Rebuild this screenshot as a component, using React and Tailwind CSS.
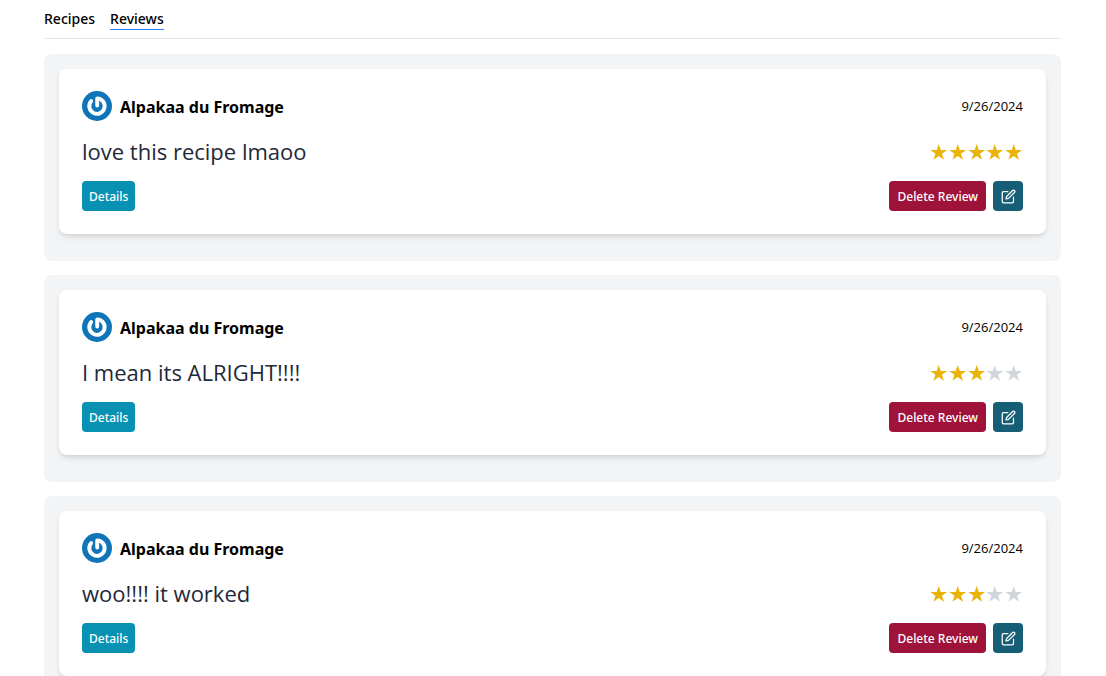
import { FiEdit } from "react-icons/fi";

const reviews = [
  { id: 1, author: "Alpakaa du Fromage", date: "9/26/2024", text: "love this recipe lmaoo", rating: 5 },
  { id: 2, author: "Alpakaa du Fromage", date: "9/26/2024", text: "I mean its ALRIGHT!!!!", rating: 3 },
  { id: 3, author: "Alpakaa du Fromage", date: "9/26/2024", text: "woo!!!! it worked", rating: 3 },
];

function Avatar() {
  return (
    <svg viewBox="0 0 30 30" className="size-[30px] shrink-0" aria-hidden="true">
      <circle cx="15" cy="15" r="15" fill="#0f75b8" />
      <path d="M15.2 14.6V7.4A7.7 7.7 0 1 1 9.2 10" fill="none" stroke="#fff" strokeWidth="3.9" strokeLinecap="round" strokeLinejoin="round" />
    </svg>
  );
}

function Stars({ rating }) {
  return (
    <div className="grid w-[94px] grid-cols-5" role="img" aria-label={`${rating} out of 5 stars`}>
      {[1, 2, 3, 4, 5].map((n) => (
        <svg key={n} viewBox="0 0 24 24" className={n <= rating ? "w-full fill-[#eab308]" : "w-full fill-gray-300"}>
          <path d="M12.4 2.4l2.6 7.8h8.1l-6.5 4.8 2.5 7.8-6.7-4.8-6.7 4.8 2.5-7.8-6.5-4.8h8.1z" />
        </svg>
      ))}
    </div>
  );
}

function ReviewCard({ review }) {
  return (
    <li className="rounded-lg bg-gray-100 px-[15px] pt-[15px] pb-[27px]">
      <article className="rounded-lg bg-white p-[23px] pt-[22px] shadow-md">
        <header className="flex items-center justify-between">
          <div className="flex items-center gap-2">
            <Avatar />
            <h3 className="pt-[2px] text-[16px] leading-[28px] font-bold text-black">{review.author}</h3>
          </div>
          <time className="font-['Open_Sans',sans-serif] text-[13px] leading-[30px] text-black">{review.date}</time>
        </header>
        <div className="mt-[15px] flex h-[30px] items-center justify-between">
          <p className="font-['Open_Sans',sans-serif] text-[22px] leading-[30px] font-medium text-gray-800">{review.text}</p>
          <Stars rating={review.rating} />
        </div>
        <div className="mt-[15px] flex items-center justify-between">
          <button className="h-[30px] rounded bg-[#0891b2] px-[7px] pt-[2px] text-[12px] font-medium text-white">Details</button>
          <div className="flex gap-[7px]">
            <button className="h-[30px] rounded bg-[#9f1239] px-2 pt-[2px] text-[12px] font-medium text-white">Delete Review</button>
            <button aria-label="Edit review" className="flex size-[30px] items-center justify-center rounded bg-[#155e75] text-white">
              <FiEdit className="size-[15px]" />
            </button>
          </div>
        </div>
      </article>
    </li>
  );
}

export default function App() {
  return (
    <main className="bg-white pr-[45px] pl-[44px] font-['Noto_Sans',sans-serif]">
      <nav className="flex gap-[15px] border-b border-gray-200 pt-2 pb-2 text-[14px] leading-[21px] font-medium text-black">
        <a href="#recipes" className="border-b border-transparent">Recipes</a>
        <a href="#reviews" className="border-b border-blue-500">Reviews</a>
      </nav>
      <ul className="mt-[15px] flex flex-col gap-[14px]">
        {reviews.map((r) => (
          <ReviewCard key={r.id} review={r} />
        ))}
      </ul>
    </main>
  );
}
